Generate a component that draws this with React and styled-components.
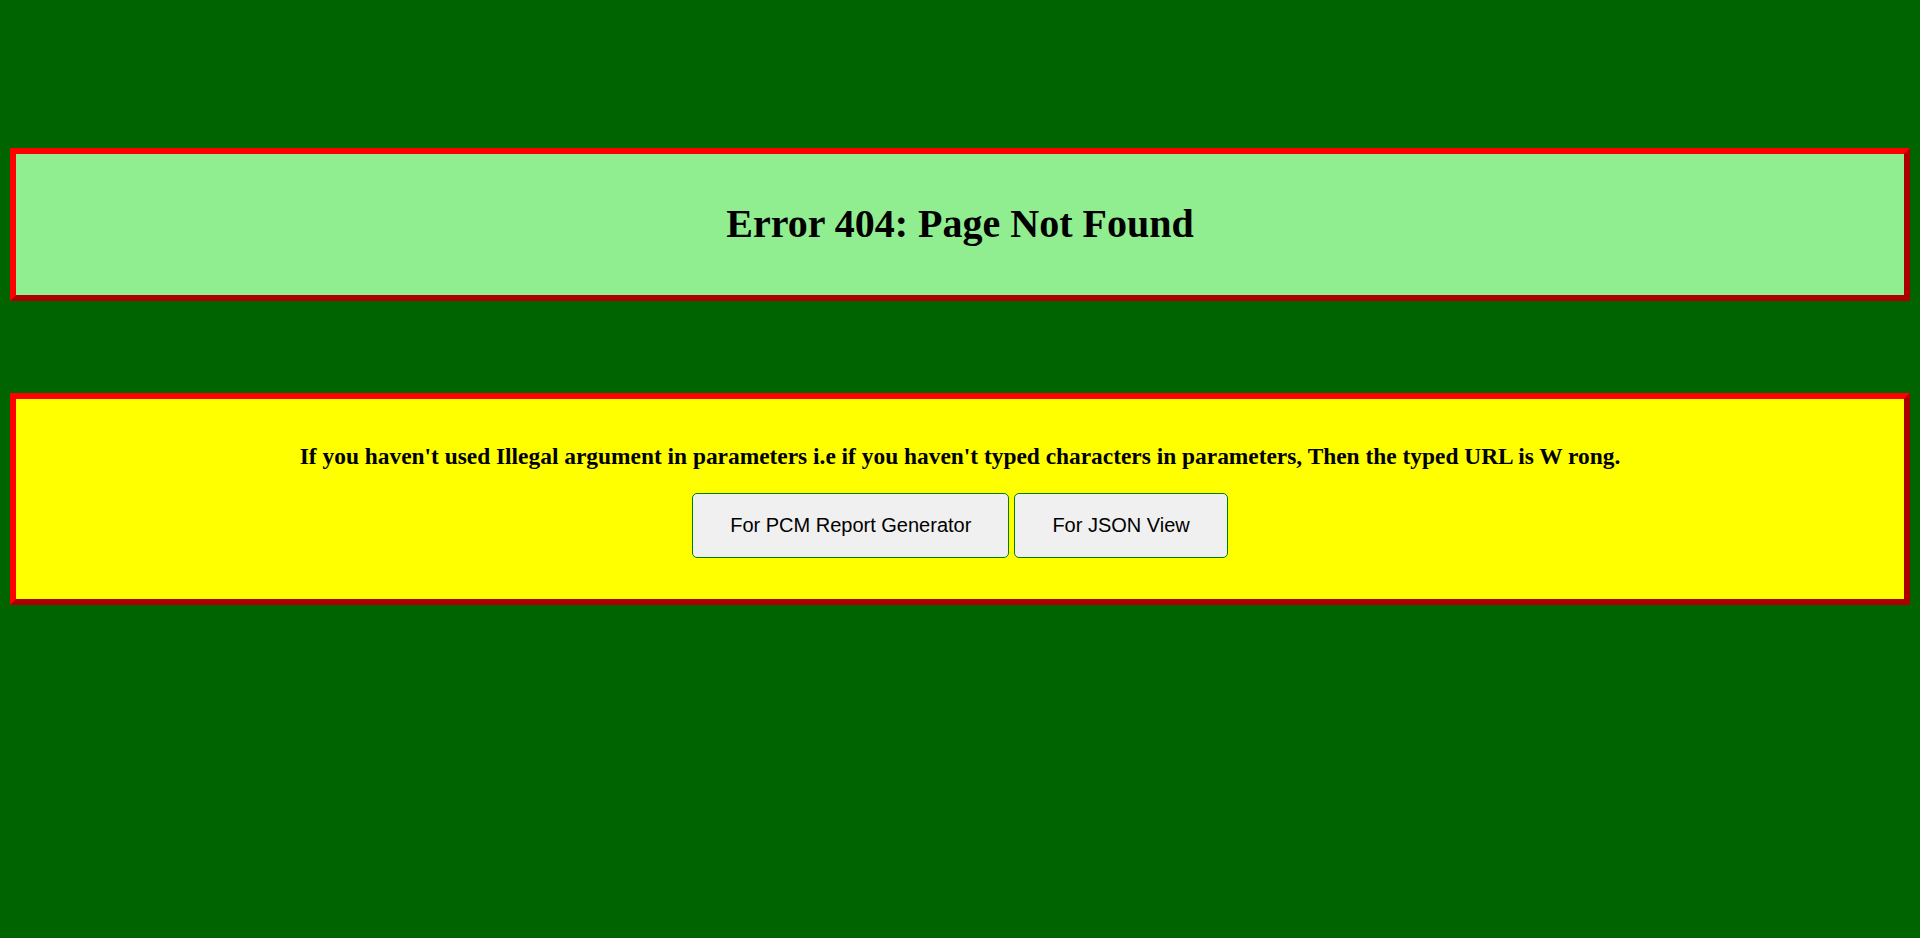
import React from "react";
import styled, { createGlobalStyle } from "styled-components";

const GlobalStyle = createGlobalStyle`
  html, body {
    margin: 0;
    padding: 0;
    background: #006400;
  }
  body {
    font-family: "Liberation Serif", "Times New Roman", serif;
    min-height: 938px;
  }
`;

const Page = styled.div`
  display: flex;
  flex-direction: column;
  gap: 92px;
  padding: 148px 10px 0;
`;

const Panel = styled.section`
  border: 6px outset red;
  background: ${(p) => p.$bg};
  text-align: center;
  padding: ${(p) => p.$pad};
`;

const Title = styled.h1`
  margin: 0;
  font-family: "Liberation Serif", "Times New Roman", serif;
  font-weight: bold;
  font-size: 40px;
  line-height: 46px;
  color: #000;
`;

const Message = styled.p`
  margin: 0 0 24px;
  font-family: "Liberation Serif", "Times New Roman", serif;
  font-weight: bold;
  font-size: 23.4px;
  line-height: 25px;
  color: #000;
`;

const Actions = styled.div`
  display: flex;
  justify-content: center;
  gap: 5px;
`;

const Button = styled.button`
  font-family: "Liberation Sans", Arial, sans-serif;
  font-size: 20px;
  line-height: 23px;
  padding: 20px 37px;
  background: #f0f0f0;
  color: #000;
  border: 1px solid #008000;
  border-radius: 5px;
  cursor: pointer;
`;

export default function App() {
  return (
    <>
      <GlobalStyle />
      <Page>
        <Panel $bg="#90ee90" $pad="47px 0 48px">
          <Title>Error 404: Page Not Found</Title>
        </Panel>
        <Panel $bg="#ffff00" $pad="45px 0 41px">
          <Message>
            If you haven't used Illegal argument in parameters i.e if you haven't typed
            characters in parameters, Then the typed URL is W rong.
          </Message>
          <Actions>
            <Button>For PCM Report Generator</Button>
            <Button>For JSON View</Button>
          </Actions>
        </Panel>
      </Page>
    </>
  );
}
